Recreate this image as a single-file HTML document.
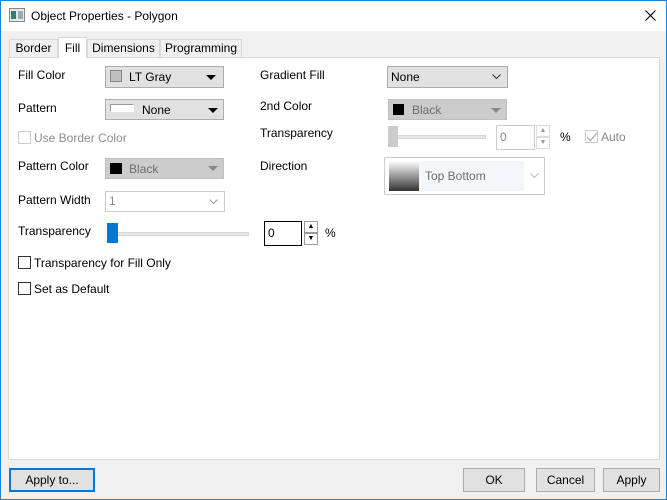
<!DOCTYPE html>
<html><head><style>
*{box-sizing:border-box;margin:0;padding:0}
body{width:667px;height:500px;overflow:hidden;font-family:"Liberation Sans",sans-serif;font-size:12px;color:#000;background:#f0f0f0;position:relative}
.a{position:absolute}
.win{left:0;top:0;width:667px;height:500px;border:1px solid #1883d7;border-top:none}
.title{left:0;top:0;width:667px;height:31px;background:#fff;border-top:1px solid #1883d7}
.lbl{position:absolute;white-space:nowrap;line-height:14px}
.combo{position:absolute;background:#e1e1e1;border:1px solid #adadad}
.dis{background:#cccccc;border-color:#bfbfbf;color:#6d6d6d}
.tri{position:absolute;width:0;height:0;border-left:5px solid transparent;border-right:5px solid transparent;border-top:5px solid #000}
.cb{position:absolute;width:13px;height:13px;border:1px solid #333;background:#fff}
.btn{position:absolute;background:#e1e1e1;border:1px solid #adadad;text-align:center;line-height:22px}
.tab{position:absolute;border:1px solid #d9d9d9;border-bottom:none;background:#f0f0f0;line-height:17px;text-align:center}
</style></head><body>
<div class="a title"></div>
<svg class="a" style="left:9px;top:8px" width="16" height="14"><rect x="0.5" y="0.5" width="15" height="13" fill="#e8e8e8" stroke="#888"/><rect x="2" y="3" width="5" height="8" fill="#3a7a6a"/><rect x="9" y="3" width="5" height="8" fill="#9ab"/></svg>
<div class="lbl" style="left:31px;top:9px;font-size:12px">Object Properties - Polygon</div>
<svg class="a" style="left:645px;top:10px" width="11" height="11"><path d="M0.5 0.5L10.5 10.5M10.5 0.5L0.5 10.5" stroke="#000" stroke-width="1.1"/></svg>
<div class="a win"></div>

<div class="a" style="left:8px;top:57px;width:652px;height:403px;background:#fff;border:1px solid #d9d9d9"></div>
<div class="tab" style="left:9px;top:39px;width:49px;height:18px">Border</div>
<div class="tab" style="left:58px;top:37px;width:29px;height:21px;background:#fff;line-height:20px">Fill</div>
<div class="tab" style="left:87px;top:39px;width:73px;height:18px">Dimensions</div>
<div class="tab" style="left:160px;top:39px;width:82px;height:18px">Programming</div>

<!-- left column -->
<div class="lbl" style="left:18px;top:68px">Fill Color</div>
<div class="combo" style="left:105px;top:66px;width:119px;height:22px"></div>
<div class="a" style="left:110px;top:70px;width:12px;height:12px;background:#c0c0c0;border:1px solid #888"></div>
<div class="lbl" style="left:129px;top:70px">LT Gray</div>
<div class="tri" style="left:206px;top:75px"></div>

<div class="lbl" style="left:18px;top:101px">Pattern</div>
<div class="combo" style="left:105px;top:99px;width:119px;height:21px"></div>
<div class="a" style="left:110px;top:104px;width:24px;height:8px;background:#fff;border:1px solid #999;border-right-color:#fff;border-bottom-color:#fff"></div>
<div class="lbl" style="left:142px;top:103px">None</div>
<div class="tri" style="left:208px;top:108px"></div>

<div class="cb" style="left:18px;top:131px;border-color:#ccc"></div>
<div class="lbl" style="left:34px;top:131px;color:#8d8d8d">Use Border Color</div>

<div class="lbl" style="left:18px;top:159px">Pattern Color</div>
<div class="combo dis" style="left:105px;top:158px;width:119px;height:21px"></div>
<div class="a" style="left:110px;top:163px;width:12px;height:11px;background:#000"></div>
<div class="lbl" style="left:129px;top:162px;color:#6d6d6d">Black</div>
<div class="tri" style="left:208px;top:166px;border-top-color:#888"></div>

<div class="lbl" style="left:18px;top:193px">Pattern Width</div>
<div class="a" style="left:105px;top:191px;width:120px;height:21px;background:#fff;border:1px solid #ccc"></div>
<div class="lbl" style="left:109px;top:194px;color:#888">1</div>
<svg class="a" style="left:209px;top:199px" width="9" height="6"><path d="M0.5 0.5L4.5 4.5L8.5 0.5" fill="none" stroke="#999"/></svg>

<div class="lbl" style="left:18px;top:224px">Transparency</div>
<div class="a" style="left:110px;top:232px;width:139px;height:4px;background:#e7e7e7;border:1px solid #d6d6d6"></div>
<div class="a" style="left:107px;top:223px;width:11px;height:20px;background:#0078d7"></div>
<div class="a" style="left:264px;top:221px;width:38px;height:25px;background:#fff;border:1px solid #000"></div>
<div class="lbl" style="left:268px;top:226px">0</div>
<div class="a" style="left:304px;top:221px;width:14px;height:12px;background:#fff;border:1px solid #999;font-size:7px;text-align:center;line-height:10px">▲</div>
<div class="a" style="left:304px;top:233px;width:14px;height:12px;background:#fff;border:1px solid #999;font-size:7px;text-align:center;line-height:10px">▼</div>
<div class="lbl" style="left:325px;top:226px">%</div>

<div class="cb" style="left:18px;top:256px"></div>
<div class="lbl" style="left:34px;top:256px">Transparency for Fill Only</div>
<div class="cb" style="left:18px;top:282px"></div>
<div class="lbl" style="left:34px;top:282px">Set as Default</div>

<!-- right column -->
<div class="lbl" style="left:260px;top:68px">Gradient Fill</div>
<div class="combo" style="left:387px;top:66px;width:121px;height:22px"></div>
<div class="lbl" style="left:391px;top:70px">None</div>
<svg class="a" style="left:492px;top:74px" width="9" height="6"><path d="M0.5 0.5L4.5 4.5L8.5 0.5" fill="none" stroke="#333"/></svg>

<div class="lbl" style="left:260px;top:99px">2nd Color</div>
<div class="combo dis" style="left:388px;top:99px;width:119px;height:21px"></div>
<div class="a" style="left:393px;top:104px;width:11px;height:11px;background:#000"></div>
<div class="lbl" style="left:412px;top:103px;color:#6d6d6d">Black</div>
<div class="tri" style="left:491px;top:108px;border-top-color:#888"></div>

<div class="lbl" style="left:260px;top:126px">Transparency</div>
<div class="a" style="left:395px;top:135px;width:91px;height:4px;background:#e7e7e7;border:1px solid #d6d6d6"></div>
<div class="a" style="left:388px;top:126px;width:10px;height:21px;background:#ccc"></div>
<div class="a" style="left:496px;top:125px;width:39px;height:25px;background:#fff;border:1px solid #ccc"></div>
<div class="lbl" style="left:500px;top:130px;color:#888">0</div>
<div class="a" style="left:536px;top:125px;width:14px;height:12px;background:#fff;border:1px solid #ddd;font-size:7px;text-align:center;line-height:10px;color:#999">▲</div>
<div class="a" style="left:536px;top:137px;width:14px;height:12px;background:#fff;border:1px solid #ddd;font-size:7px;text-align:center;line-height:10px;color:#999">▼</div>
<div class="lbl" style="left:560px;top:130px">%</div>
<div class="cb" style="left:585px;top:130px;border-color:#ccc"></div>
<svg class="a" style="left:586px;top:132px" width="12" height="10"><path d="M1 5L4.5 8.5L11 1" fill="none" stroke="#aaa" stroke-width="1.2"/></svg>
<div class="lbl" style="left:601px;top:130px;color:#888">Auto</div>

<div class="lbl" style="left:260px;top:159px">Direction</div>
<div class="a" style="left:384px;top:157px;width:161px;height:38px;background:#fff;border:1px solid #ccc"></div>
<div class="a" style="left:419px;top:161px;width:105px;height:30px;background:#f3f6fb"></div>
<div class="a" style="left:389px;top:161px;width:30px;height:30px;background:linear-gradient(#fff,#333)"></div>
<div class="lbl" style="left:425px;top:169px;color:#6d6d6d">Top Bottom</div>
<svg class="a" style="left:530px;top:173px" width="9" height="6"><path d="M0.5 0.5L4.5 4.5L8.5 0.5" fill="none" stroke="#bbb"/></svg>

<!-- buttons -->
<div class="btn" style="left:9px;top:468px;width:86px;height:24px;border:2px solid #0078d7;line-height:20px">Apply to...</div>
<div class="btn" style="left:463px;top:468px;width:62px;height:24px">OK</div>
<div class="btn" style="left:536px;top:468px;width:59px;height:24px">Cancel</div>
<div class="btn" style="left:603px;top:468px;width:57px;height:24px">Apply</div>
</body></html>
